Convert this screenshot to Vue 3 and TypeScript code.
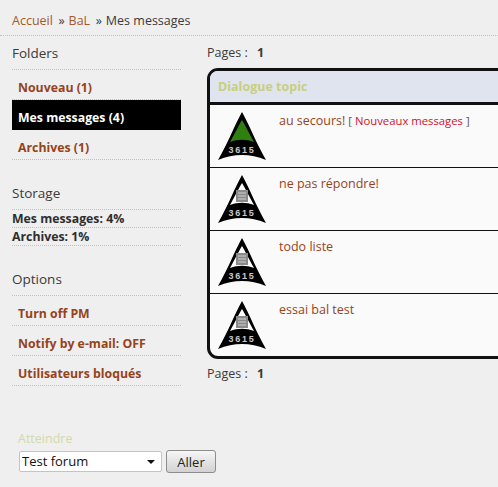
<script setup lang="ts">
interface Folder { label: string; active?: boolean }
const folders: Folder[] = [
  { label: 'Nouveau (1)' },
  { label: 'Mes messages (4)', active: true },
  { label: 'Archives (1)' },
]
const options: string[] = ['Turn off PM', 'Notify by e-mail: OFF', 'Utilisateurs bloqués']
const storage: string[] = ['Mes messages: 4%', 'Archives: 1%']
interface Topic { title: string; fresh?: boolean }
const topics: Topic[] = [
  { title: 'au secours!', fresh: true },
  { title: 'ne pas répondre!' },
  { title: 'todo liste' },
  { title: 'essai bal test' },
]
</script>

<template>
  <div class="page">
    <nav class="crumbs">
      <a>Accueil</a><span class="sep">»</span><a>BaL</a><span class="sep">»</span><span>Mes messages</span>
    </nav>
    <div class="columns">
      <aside class="side">
        <h3 class="head">Folders</h3>
        <ul class="menu">
          <li v-for="f in folders" :key="f.label" :class="{ active: f.active }">{{ f.label }}</li>
        </ul>
        <h3 class="head second">Storage</h3>
        <ul class="stats">
          <li v-for="s in storage" :key="s">{{ s }}</li>
        </ul>
        <h3 class="head second">Options</h3>
        <ul class="menu">
          <li v-for="o in options" :key="o">{{ o }}</li>
        </ul>
      </aside>
      <main class="main">
        <div class="pages">Pages : <b>1</b></div>
        <div class="box">
          <div class="box-head">Dialogue topic</div>
          <div v-for="t in topics" :key="t.title" class="row">
            <svg class="icon" width="48" height="48" viewBox="0 0 48 48">
              <path d="M24 0 C31 12 39 33 48 48 C40 44.500 32 43 24 43 C16 43 8 44.500 0 48 C9 33 17 12 24 0 Z" fill="#000" />
              <template v-if="t.fresh">
                <path d="M24 8 C27 13 32 23 36 30 C28 27 20 27 12 30 C16 23 21 13 24 8 Z" fill="#2f7f12" />
              </template>
              <template v-else>
                <path d="M24 8 C27 13 32 23 36 30 C28 27 20 27 12 30 C16 23 21 13 24 8 Z" fill="#fff" />
                <rect x="18" y="15" width="12" height="12" fill="#8a8a8a" />
                <path d="M20 18H28M20 21H28M20 24H28" stroke="#d0d0d0" stroke-width="1" />
              </template>
              <text x="24" y="41" class="num" text-anchor="middle">3615</text>
            </svg>
            <div class="topic">
              <a>{{ t.title }}</a>
              <span v-if="t.fresh" class="tag"> [ <em>Nouveaux messages</em> ]</span>
            </div>
          </div>
        </div>
        <div class="pages lower">Pages : <b>1</b></div>
      </main>
    </div>
    <div class="jump">
      <label class="jump-label">Atteindre</label>
      <div class="jump-row">
        <span class="sel-wrap">
          <select class="sel"><option>Test forum</option></select>
        </span>
        <button class="btn">Aller</button>
      </div>
    </div>
  </div>
</template>

<style>
html, body { margin: 0; overflow: hidden; background: #efefef; }
</style>

<style scoped>
.page {
  width: 498px;
  height: 487px;
  overflow: hidden;
  box-sizing: border-box;
  padding-top: 12px;
  font-family: "Open Sans", "Noto Sans", sans-serif;
  font-size: 12.5px;
  color: #3a3a3a;
}
.crumbs {
  height: 23px;
  line-height: 17px;
  padding-left: 12px;
  border-bottom: 1px dotted #c5c98f;
}
.crumbs a { color: #a5582a; }
.sep { margin: 0 4px 0 5.500px; }
.columns { display: flex; align-items: flex-start; }
.side { width: 169px; margin-left: 12px; flex: none; }
.head {
  margin: 0;
  font-weight: 400;
  font-size: 13.5px;
  height: 33px;
  line-height: 35px;
  border-bottom: 1px dotted #c5c98f;
  color: #3a3a3a;
}
.head.second { margin-top: 16px; height: 33px; }
.menu, .stats { list-style: none; margin: 0; padding: 0; }
.menu li {
  height: 29px;
  line-height: 36px;
  padding-left: 6px;
  border-bottom: 1px dotted #c5c98f;
  color: #96431a;
  font-weight: 700;
  font-size: 12.3px;
}
.menu li.active { background: #000; color: #fff; border-bottom-color: transparent; }
.stats li {
  height: 17px;
  line-height: 17px;
  border-bottom: 1px dotted #c5c98f;
  color: #2e2e2e;
  font-weight: 700;
  font-size: 12.3px;
}
.main { margin-left: 26px; width: 320px; flex: none; }
.pages { height: 32px; line-height: 34px; }
.pages b { margin-left: 6px; }
.pages.lower { height: 24px; line-height: 29px; }
.box {
  border: 3px solid #111;
  border-radius: 11px;
  background: #fafafa;
  overflow: hidden;
  width: 320px;
  box-sizing: border-box;
}
.box-head {
  height: 31px;
  line-height: 31px;
  background: #dfe4ee;
  padding-left: 8px;
  border-bottom: 3px solid #111;
  color: #c8cf7e;
  font-weight: 700;
}
.row {
  display: flex;
  height: 62px;
  border-bottom: 1px solid #111;
}
.row:last-child { border-bottom: 0; }
.icon { margin: 7px 0 0 8px; flex: none; }
.num { font: 700 9px "Liberation Sans", sans-serif; fill: #c8c8c8; letter-spacing: 1.700px; }
.topic { margin-left: 13px; padding-top: 7px; line-height: 17px; }
.topic a { color: #96431a; }
.tag { font-size: 11.3px; color: #555; }
.tag em { font-style: normal; color: #d0112b; }
.jump { margin-top: 43px; padding-left: 18px; }
.jump-label { display: block; color: #d4d9a6; height: 21px; line-height: 19px; }
.jump-row { display: flex; align-items: center; gap: 4px; }
.sel-wrap {
  position: relative;
  display: block;
  width: 143px;
  height: 21px;
  margin-left: 1px;
}
.sel-wrap::after {
  content: "";
  position: absolute;
  right: 7px;
  top: 9px;
  border-left: 4px solid transparent;
  border-right: 4px solid transparent;
  border-top: 4px solid #111;
}
.sel {
  appearance: none;
  display: block;
  box-sizing: border-box;
  width: 143px;
  height: 21px;
  padding: 0 0 2px 2px;
  font: 13px "Open Sans", sans-serif;
  border: 1px solid #c4c4c4;
  border-radius: 2px;
  background-color: #fff;
  color: #111;
}
.btn {
  width: 50px;
  height: 23px;
  padding: 0;
  font: 13px "Open Sans", sans-serif;
  color: #222;
  border: 1px solid #8d8d8d;
  border-radius: 3px;
  background: linear-gradient(#f6f6f6, #d2d2d2);
}
</style>
